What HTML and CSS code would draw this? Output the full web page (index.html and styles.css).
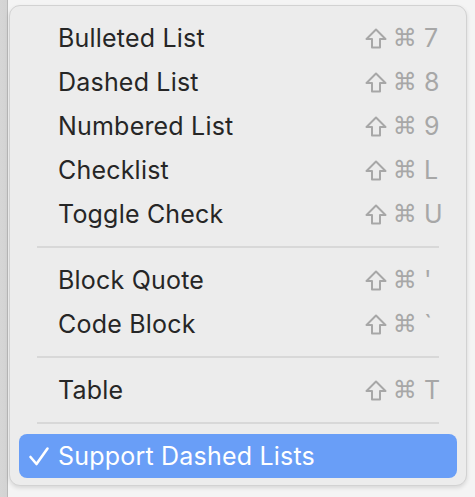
FILE: index.html
```html
<!DOCTYPE html>
<html>
<head>
<meta charset="utf-8">
<link rel="stylesheet" href="styles.css">
</head>
<body>
<div class="stage">
  <div class="menu">
    <div class="item"><span class="check"></span><span class="label">Bulleted List</span><span class="sc"><svg class="shift" viewBox="0 0 22 21"><path d="M11 1.5 L20.5 11 H15 V19.5 H7 V11 H1.5 Z"/></svg><span class="cmd">⌘</span><span class="key">7</span></span></div>
    <div class="item"><span class="check"></span><span class="label">Dashed List</span><span class="sc"><svg class="shift" viewBox="0 0 22 21"><path d="M11 1.5 L20.5 11 H15 V19.5 H7 V11 H1.5 Z"/></svg><span class="cmd">⌘</span><span class="key">8</span></span></div>
    <div class="item"><span class="check"></span><span class="label">Numbered List</span><span class="sc"><svg class="shift" viewBox="0 0 22 21"><path d="M11 1.5 L20.5 11 H15 V19.5 H7 V11 H1.5 Z"/></svg><span class="cmd">⌘</span><span class="key">9</span></span></div>
    <div class="item"><span class="check"></span><span class="label">Checklist</span><span class="sc"><svg class="shift" viewBox="0 0 22 21"><path d="M11 1.5 L20.5 11 H15 V19.5 H7 V11 H1.5 Z"/></svg><span class="cmd">⌘</span><span class="key">L</span></span></div>
    <div class="item"><span class="check"></span><span class="label">Toggle Check</span><span class="sc"><svg class="shift" viewBox="0 0 22 21"><path d="M11 1.5 L20.5 11 H15 V19.5 H7 V11 H1.5 Z"/></svg><span class="cmd">⌘</span><span class="key">U</span></span></div>
    <div class="sep"></div>
    <div class="item"><span class="check"></span><span class="label">Block Quote</span><span class="sc"><svg class="shift" viewBox="0 0 22 21"><path d="M11 1.5 L20.5 11 H15 V19.5 H7 V11 H1.5 Z"/></svg><span class="cmd">⌘</span><span class="key">'</span></span></div>
    <div class="item"><span class="check"></span><span class="label">Code Block</span><span class="sc"><svg class="shift" viewBox="0 0 22 21"><path d="M11 1.5 L20.5 11 H15 V19.5 H7 V11 H1.5 Z"/></svg><span class="cmd">⌘</span><span class="key">`</span></span></div>
    <div class="sep"></div>
    <div class="item"><span class="check"></span><span class="label">Table</span><span class="sc"><svg class="shift" viewBox="0 0 22 21"><path d="M11 1.5 L20.5 11 H15 V19.5 H7 V11 H1.5 Z"/></svg><span class="cmd">⌘</span><span class="key">T</span></span></div>
    <div class="sep"></div>
    <div class="item active"><span class="check"><svg class="tick" viewBox="0 0 22 22"><path d="M2.5 12 L8.5 19 L19.5 3.5"/></svg></span><span class="label">Support Dashed Lists</span></div>
  </div>
</div>
</body>
</html>
```
FILE: styles.css
```css
html, body {
  margin: 0;
  padding: 0;
}
body {
  width: 475px;
  height: 497px;
  overflow: hidden;
  background: linear-gradient(to right, #d6d6d6 0, #d3d3d3 7px, #b9b9b9 7px, #b9b9b9 8px, #f4f4f4 8px);
  font-family: "Inter", "Liberation Sans", sans-serif;
}
.stage {
  padding: 5px 8px 0 9px;
}
.menu {
  width: 458px;
  height: 481px;
  box-sizing: border-box;
  background: #ececec;
  border: 1px solid #d2d2d2;
  border-radius: 11px;
  box-shadow: 0 2px 4px rgba(0,0,0,0.12);
  padding: 10px 9px 0 9px;
}
.item {
  height: 44px;
  display: flex;
  align-items: center;
  padding: 0 17px 0 0;
  border-radius: 8px;
  color: #262626;
  font-size: 25px;
  letter-spacing: 0.2px;
}
.check {
  width: 39px;
  flex: none;
  box-sizing: border-box;
  padding-left: 9px;
  display: flex;
  align-items: center;
}
.tick {
  width: 22px;
  height: 22px;
  fill: none;
  stroke: #ffffff;
  stroke-width: 2.6;
  stroke-linecap: round;
  stroke-linejoin: round;
}
.label {
  flex: 1;
}
.sc {
  display: flex;
  align-items: center;
  color: #a7a7a7;
}
.shift {
  width: 22px;
  height: 21px;
  fill: none;
  stroke: #a7a7a7;
  stroke-width: 2;
  stroke-linejoin: round;
  margin-right: 6px;
  margin-top: 1px;
}
.cmd {
  font-family: "DejaVu Sans", sans-serif;
  font-size: 24px;
}
.key {
  width: 16px;
  margin-left: 7px;
}
.sep {
  height: 22px;
  display: flex;
  align-items: center;
  padding: 0 18px;
}
.sep::before {
  content: "";
  flex: 1;
  height: 2px;
  background: #d8d8d8;
}
.active {
  background: #699ef7;
  color: #ffffff;
}
```
